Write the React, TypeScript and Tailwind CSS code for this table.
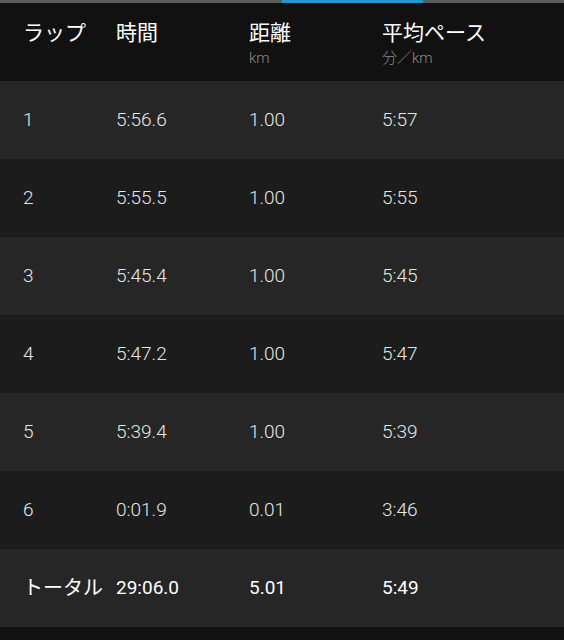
import React from 'react';

interface Lap {
  lap: string;
  time: string;
  distance: string;
  pace: string;
}

const laps: Lap[] = [
  { lap: '1', time: '5:56.6', distance: '1.00', pace: '5:57' },
  { lap: '2', time: '5:55.5', distance: '1.00', pace: '5:55' },
  { lap: '3', time: '5:45.4', distance: '1.00', pace: '5:45' },
  { lap: '4', time: '5:47.2', distance: '1.00', pace: '5:47' },
  { lap: '5', time: '5:39.4', distance: '1.00', pace: '5:39' },
  { lap: '6', time: '0:01.9', distance: '0.01', pace: '3:46' },
];

const font = { fontFamily: 'Roboto, "Noto Sans CJK JP", sans-serif' };

export default function App() {
  return (
    <div className="w-[564px] h-[640px] bg-[#111111] text-[#e6e6e6] overflow-hidden" style={font}>
      {/* Tab indicator */}
      <div className="flex h-[3px] bg-[#5c5c5c]">
        <div className="w-[282px]" />
        <div className="w-[141px] bg-[#1a9ad6]" />
      </div>

      {/* Header */}
      <div className="flex h-[78px] pt-[15px] text-[21px] leading-[30px] text-white">
        <div className="w-[116px] pl-[23px]">ラップ</div>
        <div className="w-[133px]">時間</div>
        <div className="w-[133px]">
          <div>距離</div>
          <div className="text-[15px] leading-[20px] text-[#8a8a8a] font-light">km</div>
        </div>
        <div>
          <div>平均ペース</div>
          <div className="text-[15px] leading-[20px] text-[#8a8a8a] font-light">分／km</div>
        </div>
      </div>

      {/* Lap rows */}
      {laps.map((l, i) => (
        <div
          key={l.lap}
          className={`flex items-center h-[78px] text-[19px] font-light ${
            i % 2 === 0 ? 'bg-[#262626]' : 'bg-[#1c1c1c]'
          }`}
        >
          <div className="w-[116px] pl-[23px]">{l.lap}</div>
          <div className="w-[133px]">{l.time}</div>
          <div className="w-[133px]">{l.distance}</div>
          <div>{l.pace}</div>
        </div>
      ))}

      {/* Total */}
      <div className="flex items-center h-[78px] text-[19px] bg-[#262626] text-white">
        <div className="w-[116px] pl-[23px] text-[20px]">トータル</div>
        <div className="w-[133px]">29:06.0</div>
        <div className="w-[133px]">5.01</div>
        <div>5:49</div>
      </div>
    </div>
  );
}
